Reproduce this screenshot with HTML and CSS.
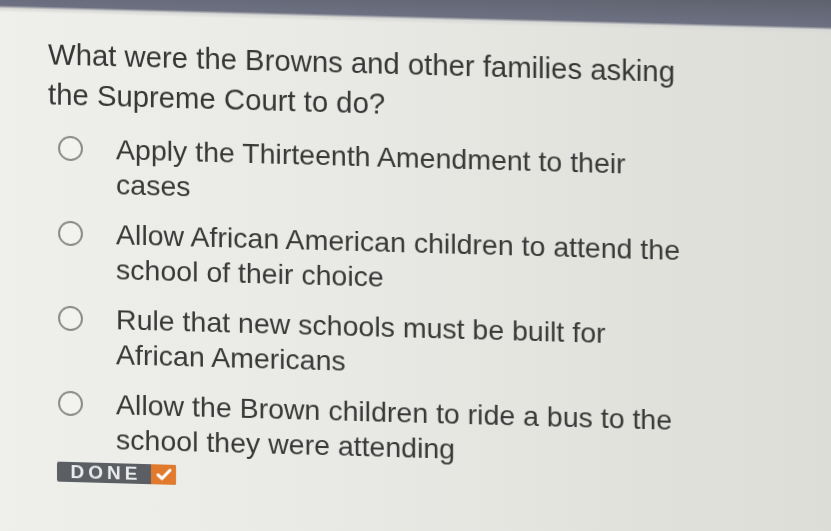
FILE: index.html
```html
<!DOCTYPE html>
<html lang="en">
<head>
<meta charset="utf-8">
<title>Question</title>
<link rel="stylesheet" href="styles.css">
</head>
<body>
<main class="screen">
  <div class="content">
    <p class="question">What were the Browns and other families asking<br>the Supreme Court to do?</p>
    <ul class="options">
      <li class="option"><span class="radio"></span><span class="label">Apply the Thirteenth Amendment to their<br>cases</span></li>
      <li class="option"><span class="radio"></span><span class="label">Allow African American children to attend the<br>school of their choice</span></li>
      <li class="option"><span class="radio"></span><span class="label">Rule that new schools must be built for<br>African Americans</span></li>
      <li class="option"><span class="radio"></span><span class="label">Allow the Brown children to ride a bus to the<br>school they were attending</span></li>
    </ul>
    <button class="done" type="button"><span class="done-text">DONE</span><span class="done-check"><svg width="16" height="14" viewBox="0 0 16 14"><path d="M2 7.5 L6 11 L14 2.5" fill="none" stroke="#fff" stroke-width="3" stroke-linecap="round" stroke-linejoin="round"/></svg></span></button>
  </div>
</main>
</body>
</html>
```
FILE: styles.css
```css
html, body {
  margin: 0;
  padding: 0;
  width: 831px;
  height: 531px;
  overflow: hidden;
}
.screen {
  width: 831px;
  height: 531px;
  background:
    linear-gradient(181.5deg, #5f626d 0, #6d7081 27px, #d8d9d6 30px, rgba(240,240,236,0) 34px),
    linear-gradient(90deg, #efefeb 0%, #e8e8e4 45%, #dcddd7 100%);
  font-family: "Liberation Sans", Arial, sans-serif;
  color: #3c3c3c;
  overflow: hidden;
}
.content {
  padding: 33px 0 0 48px;
  transform: skewY(1.6deg);
  transform-origin: 0 0;
  filter: blur(0.6px);
}
.question {
  margin: 0;
  font-size: 29.3px;
  line-height: 40px;
  color: #363636;
}
.options {
  list-style: none;
  margin: 16px 0 0 0;
  padding: 0;
  display: flex;
  flex-direction: column;
  gap: 15px;
}
.option {
  display: flex;
  align-items: flex-start;
  font-size: 28.5px;
  line-height: 35px;
}
.radio {
  flex: none;
  width: 21px;
  height: 21px;
  margin: 5px 33px 0 10px;
  border: 2.5px solid #8c8c8c;
  border-radius: 50%;
  background: #f2f2ef;
}
.label {
  color: #383838;
}
.done {
  display: flex;
  align-items: stretch;
  margin: 6px 0 0 9px;
  padding: 0;
  border: 0;
  height: 20px;
  border-radius: 2px;
  overflow: hidden;
  background: #5b5f64;
  font-family: "Liberation Sans", Arial, sans-serif;
  cursor: pointer;
}
.done-text {
  width: 90px;
  display: flex;
  align-items: center;
  justify-content: center;
  color: #ececec;
  font-weight: bold;
  font-size: 19px;
  letter-spacing: 4px;
  padding-left: 4px;
}
.done-check {
  width: 25px;
  background: #e27a2e;
  display: flex;
  align-items: center;
  justify-content: center;
}
```
